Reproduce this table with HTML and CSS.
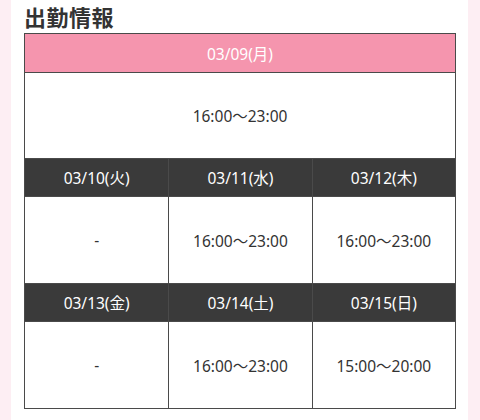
FILE: index.html
```html
<!DOCTYPE html>
<html lang="ja">
<head>
<meta charset="utf-8">
<link rel="stylesheet" href="styles.css">
</head>
<body>
<div class="page">
  <div class="content">
    <h2 class="title">出勤情報</h2>
    <div class="schedule">
      <div class="today">
        <div class="head pink">03/09(月)</div>
        <div class="cell">16:00～23:00</div>
      </div>
      <div class="week">
        <div class="head dark">03/10(火)</div>
        <div class="head dark">03/11(水)</div>
        <div class="head dark">03/12(木)</div>
        <div class="cell">-</div>
        <div class="cell">16:00～23:00</div>
        <div class="cell">16:00～23:00</div>
        <div class="head dark">03/13(金)</div>
        <div class="head dark">03/14(土)</div>
        <div class="head dark">03/15(日)</div>
        <div class="cell">-</div>
        <div class="cell">16:00～23:00</div>
        <div class="cell">15:00～20:00</div>
      </div>
    </div>
  </div>
</div>
</body>
</html>
```
FILE: styles.css
```css
html, body {
  margin: 0;
  padding: 0;
  background: #fdeef3;
}
body {
  font-family: "Noto Sans", "Noto Sans CJK JP", sans-serif;
  color: #333;
}
.page {
  padding: 0 12px 0 11px;
  height: 420px;
  overflow: hidden;
}
.content {
  background: #fff;
  height: 100%;
  padding: 0 12px 0 13px;
}
.title {
  margin: 0;
  padding-top: 2px;
  font-family: "Noto Sans CJK JP", sans-serif;
  font-size: 22px;
  font-weight: bold;
  line-height: 28px;
  height: 31px;
  color: #333;
  letter-spacing: 0.5px;
}
.schedule {
  border: 1px solid #4a4a4a;
  width: 430px;
}
.today .head {
  height: 38px;
}
.today .cell {
  height: 85px;
  border-top: 1px solid #4a4a4a;
}
.head {
  display: flex;
  align-items: center;
  justify-content: center;
  color: #fff;
  font-size: 15.5px;
}
.pink {
  background: #f595ae;
}
.dark {
  background: #3a3a3a;
  height: 37px;
}
.cell {
  display: flex;
  align-items: center;
  justify-content: center;
  font-size: 15.5px;
  color: #333;
  background: #fff;
}
.week {
  display: grid;
  grid-template-columns: 1fr 1fr 1fr;
}
.week > div {
  border-top: 1px solid #4a4a4a;
}
.week > div:nth-child(3n+2),
.week > div:nth-child(3n+3) {
  border-left: 1px solid #4a4a4a;
}
.week .cell {
  height: 86px;
}
```
